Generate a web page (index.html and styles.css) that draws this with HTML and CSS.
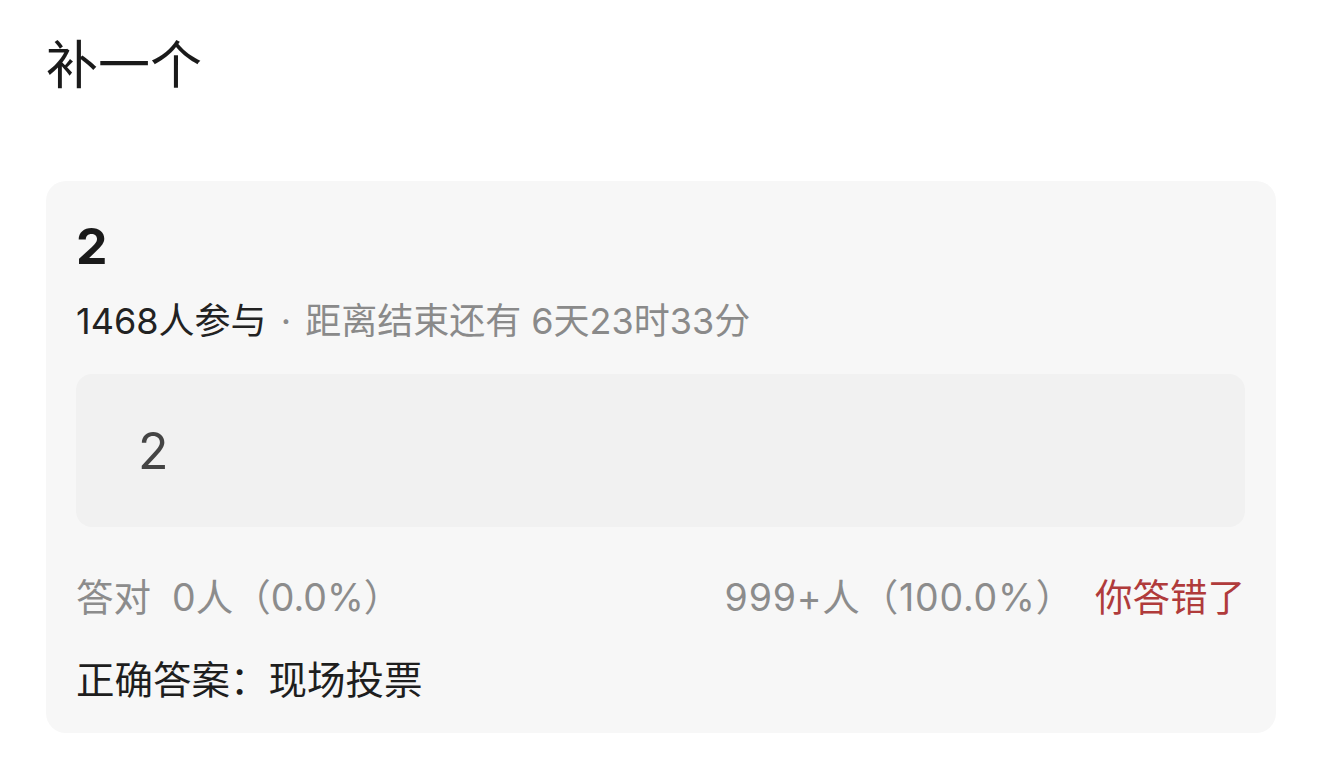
FILE: index.html
```html
<!DOCTYPE html>
<html lang="zh">
<head>
<meta charset="utf-8">
<title>补一个</title>
<link rel="stylesheet" href="styles.css">
</head>
<body>
<div class="page">
  <h1 class="title">补一个</h1>
  <div class="card">
    <div class="question">2</div>
    <div class="meta"><span class="count">1468人参与</span><span class="dot"> · </span>距离结束还有 6天23时33分</div>
    <div class="option">2</div>
    <div class="stats">
      <span class="correct">答对&nbsp; 0人（0.0%）</span>
      <span class="right-side"><span class="mine">999+人（100.0%）</span><span class="wrong">你答错了</span></span>
    </div>
    <div class="answer">正确答案：现场投票</div>
  </div>
</div>
</body>
</html>
```

FILE: styles.css
```css
html, body {
  margin: 0;
  padding: 0;
  background: #ffffff;
}
body {
  font-family: "Inter", "Noto Sans CJK SC", sans-serif;
  color: #1c1c1c;
}
.page {
  width: 1230px;
  padding: 36px 0 0 46px;
  display: flex;
  flex-direction: column;
}
.title {
  margin: 0;
  font-family: "Noto Sans CJK SC", sans-serif;
  font-size: 52px;
  font-weight: 400;
  line-height: 52px;
  color: #1a1a1a;
}
.card {
  margin-top: 93px;
  background: #f7f7f7;
  border-radius: 20px;
  padding: 35px 31px 31px 30px;
  display: flex;
  flex-direction: column;
}
.question {
  font-size: 50px;
  font-weight: 700;
  line-height: 60px;
  color: #1a1a1a;
}
.meta {
  margin-top: 25px;
  font-size: 36px;
  line-height: 40px;
  color: #8a8a8a;
}
.meta .count {
  color: #222222;
}
.meta .dot {
  padding: 0 4px;
}
.option {
  margin-top: 33px;
  height: 153px;
  background: #f1f1f1;
  border-radius: 16px;
  display: flex;
  align-items: center;
  padding-left: 62px;
  font-size: 50px;
  font-weight: 400;
  color: #444444;
}
.stats {
  margin-top: 49px;
  display: flex;
  justify-content: space-between;
  font-size: 37.5px;
  line-height: 44px;
  color: #8c8c8c;
}
.right-side {
  display: flex;
  gap: 21px;
}
.mine {
  letter-spacing: 0.8px;
}
.wrong {
  color: #b03b3b;
}
.answer {
  margin-top: 38px;
  font-size: 38.5px;
  line-height: 44px;
  color: #1e1e1e;
}
```
